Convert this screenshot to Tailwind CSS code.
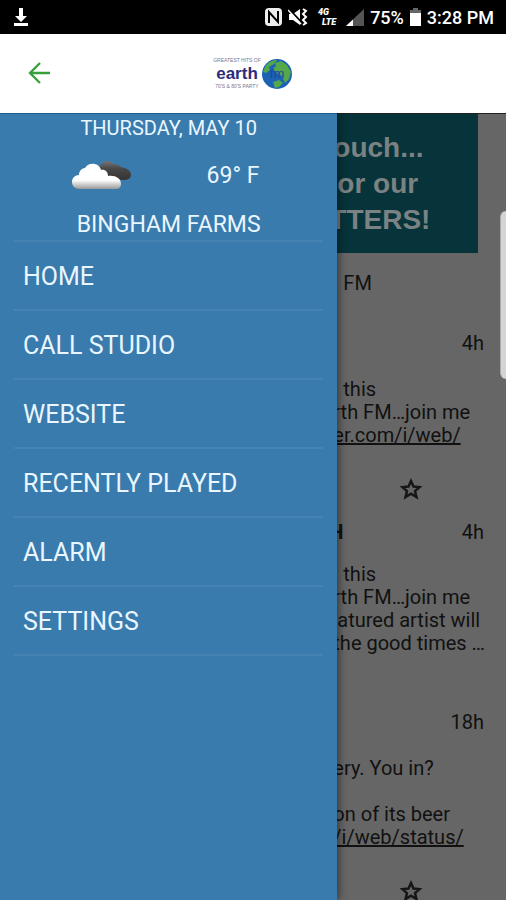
<!DOCTYPE html>
<html lang="en">
<head>
    <meta charset="UTF-8">
    <meta name="viewport" content="width=device-width, initial-scale=1.0">
    <title>Earth FM</title>
    <script src="https://cdn.jsdelivr.net/npm/@tailwindcss/browser@4"></script>
</head>
<body class="h-screen flex flex-col overflow-hidden bg-[#666666] font-['Roboto',sans-serif]">
    <!-- Status bar -->
    <div class="h-[34px] shrink-0 bg-black text-white flex items-center justify-between px-3">
        <svg class="w-[18px] h-5" viewBox="0 0 18 20" fill="#fff"><path d="M7 1h4v8h4l-6 6-6-6h4zM2 16h14v3H2z"/></svg>
        <div class="flex items-center gap-[6px] text-[18px] font-medium">
            <svg class="w-[17px] h-[18px]" viewBox="0 0 17 18"><rect width="17" height="18" rx="4" fill="#eee"/><path d="M4 15V4l9 10V3" fill="none" stroke="#000" stroke-width="2"/></svg>
            <svg class="w-5 h-[18px]" viewBox="0 0 20 18"><path d="M1 6h4l7-5v16l-7-5H1z" fill="#fff"/><path d="M1 1l13 14" stroke="#000" stroke-width="2"/><path d="M0 2l13 14" stroke="#fff" stroke-width="1.500"/><path d="M15 1l3 2-3 3 3 3-3 3 3 3-3 2" fill="none" stroke="#fff" stroke-width="2"/></svg>
            <span class="flex flex-col mx-1 text-[9px] leading-[10px] font-black italic"><span>4G</span><span class="pl-1">LTE</span></span>
            <svg class="w-[18px] h-[17px]" viewBox="0 0 18 17"><path d="M18 0v17H0z" fill="#555"/><path d="M7 10.400v6.600H0z" fill="#fff"/></svg>
            <span>75%</span>
            <svg class="w-[11px] h-[18px]" viewBox="0 0 11 18"><path d="M3 0h5v2h3v4H0V2h3z" fill="#666"/><path d="M0 5h11v13H0z" fill="#fff"/></svg>
            <span>3:28 PM</span>
        </div>
    </div>

    <!-- App header -->
    <header class="h-[79px] shrink-0 bg-white grid grid-cols-[1fr_auto_1fr] items-center px-7">
        <button type="button" aria-label="Back" class="w-6 h-6">
            <svg viewBox="0 0 24 24" fill="none" stroke="#36a03c" stroke-width="2.300"><path d="M22 11H2M12 1L2 11l10 10"/></svg>
        </button>
        <div class="flex items-center">
            <div class="text-center text-[#2b2d7c] font-['Liberation_Sans',sans-serif]">
                <div class="text-[5px] leading-[7px] text-[#77778f]">GREATEST HITS OF</div>
                <div class="text-[17px] leading-[19px] font-bold">earth</div>
                <div class="text-[5px] leading-[7px] text-[#77778f]">70'S &amp; 80'S PARTY</div>
            </div>
            <svg class="w-8 h-8" viewBox="0 0 32 32">
                <circle cx="16" cy="16" r="15" fill="#1d62b4"/>
                <path d="M4 9c3-5 7-7 12-7l-3 4-5 3 1 3-4 3-3-1zM14 5l6-2 6 4 4 7-2 7-4 4-3-7-5-3-4-4 3-3zM12 24l6-2 4 3-4 4-4 1z" fill="#55a84a"/>
                <text x="16" y="20" text-anchor="middle" font-family="Liberation Sans" font-size="13" fill="#1a4a9c">fm</text>
            </svg>
        </div>
    </header>

    <main class="relative flex-1 flex min-h-0 overflow-hidden">
        <!-- Drawer -->
        <aside class="relative z-10 w-2/3 shrink-0 bg-[#397bad] border-t border-[#1f5f8f] text-[#eaf6ff] shadow-[2px_0_8px_rgba(0,0,0,0.45)] px-[14px]">
            <section class="text-center">
                <p class="h-7 text-[20px] leading-7">THURSDAY, MAY 10</p>
                <div class="h-[68px] px-[26px] grid grid-cols-2 items-center">
                    <svg class="w-[60px] h-8 ml-8" viewBox="0 0 60 32">
                        <defs>
                            <linearGradient id="cloud" x1="0" y1="0" x2="0" y2="1"><stop offset="0.65" stop-color="#fff"/><stop offset="1" stop-color="#999"/></linearGradient>
                            <linearGradient id="dark" x1="0" y1="0" x2="0" y2="1"><stop offset="0" stop-color="#777"/><stop offset="0.4" stop-color="#484848"/><stop offset="1" stop-color="#333"/></linearGradient>
                        </defs>
                        <path d="M28 8c0-4 3-7 7-7 3 0 4 1 5 3 4-1 7 1 9 3 5 1 10 3 10 8 0 3-3 5-8 5-8 0-18-4-23-12z" fill="url(#dark)"/>
                        <path d="M7 29c-4 0-7-3-7-7s3-7 7-7c0-4 3-7 6-7 3-6 14-6 16 2 4-1 7 2 7 6 7-1 13 2 13 8 0 3-2 5-5 5z" fill="url(#cloud)"/>
                    </svg>
                    <p class="text-[23px]">69° F</p>
                </div>
                <p class="h-[30px] text-[23px] leading-[30px]">BINGHAM FARMS</p>
            </section>
            <nav class="border-t-2 border-[#4583b2] text-[25px]">
                <a href="#" class="h-[69px] pt-[2px] px-[9px] flex items-center border-b-2 border-[#4583b2]">HOME</a>
                <a href="#" class="h-[69px] pt-[2px] px-[9px] flex items-center border-b-2 border-[#4583b2]">CALL STUDIO</a>
                <a href="#" class="h-[69px] pt-[2px] px-[9px] flex items-center border-b-2 border-[#4583b2]">WEBSITE</a>
                <a href="#" class="h-[69px] pt-[2px] px-[9px] flex items-center border-b-2 border-[#4583b2]">RECENTLY PLAYED</a>
                <a href="#" class="h-[69px] pt-[2px] px-[9px] flex items-center border-b-2 border-[#4583b2]">ALARM</a>
                <a href="#" class="h-[69px] pt-[2px] px-[9px] flex items-center border-b-2 border-[#4583b2]">SETTINGS</a>
            </nav>
        </aside>

        <!-- Feed, dimmed while the drawer is open -->
        <div class="flex-1 min-w-0 border-t border-[#222] bg-[#666666] text-[#111] text-[20px] leading-[23px] whitespace-nowrap">
            <div class="h-[139px] mr-7 pt-4 bg-[#06343a] text-[#7b8283] font-['Liberation_Sans',sans-serif] font-bold text-[28px] leading-9">
                <div class="-ml-2">
                    <p class="pl-1">ouch...</p>
                    <p class="pl-2">or our</p>
                    <p>TTERS!</p>
                </div>
            </div>
            <p class="mt-[19px] pl-[6px]">FM</p>

            <article>
                <p class="mt-[37px] pr-[22px] text-right">4h</p>
                <div class="mt-[23px] -ml-1">
                    <p class="pl-[10px]">this</p>
                    <p>rth FM…join me</p>
                    <p><a href="#" class="underline">er.com/i/web/</a></p>
                </div>
                <button type="button" aria-label="Favorite" class="block mt-[30px] ml-[62px] w-6 h-6">
                    <svg viewBox="0 0 24 24" fill="none" stroke="#161616" stroke-width="2.500"><path d="M12 4l2.500 5.500 6 .6-4.500 4 1.500 6-5.500-3.300-5.500 3.300L8 14.100l-4.500-4 6-.6z"/></svg>
                </button>
            </article>

            <article>
                <div class="mt-5 pr-[22px] flex justify-between"><b class="-ml-2">H</b><span>4h</span></div>
                <div class="mt-[19px] -ml-1">
                    <p class="pl-[10px]">this</p>
                    <p>rth FM…join me</p>
                    <p class="pl-1">atured artist will</p>
                    <p>the good times …</p>
                </div>
            </article>

            <article>
                <p class="mt-[56px] pr-[22px] text-right">18h</p>
                <div class="mt-[23px] -ml-1">
                    <p>ery. You in?</p>
                    <br>
                    <p>on of its beer</p>
                    <p><a href="#" class="underline">/i/web/status/</a></p>
                </div>
                <button type="button" aria-label="Favorite" class="block mt-[30px] ml-[62px] w-6 h-6">
                    <svg viewBox="0 0 24 24" fill="none" stroke="#161616" stroke-width="2.500"><path d="M12 4l2.500 5.500 6 .6-4.500 4 1.500 6-5.500-3.300-5.500 3.300L8 14.100l-4.500-4 6-.6z"/></svg>
                </button>
            </article>
        </div>

        <!-- Edge panel handle -->
        <div class="absolute right-0 top-[98px] w-[6px] h-[168px] rounded-l-md bg-[#d4d4d4] border-l border-[#aaa]"></div>
    </main>
</body>
</html>
